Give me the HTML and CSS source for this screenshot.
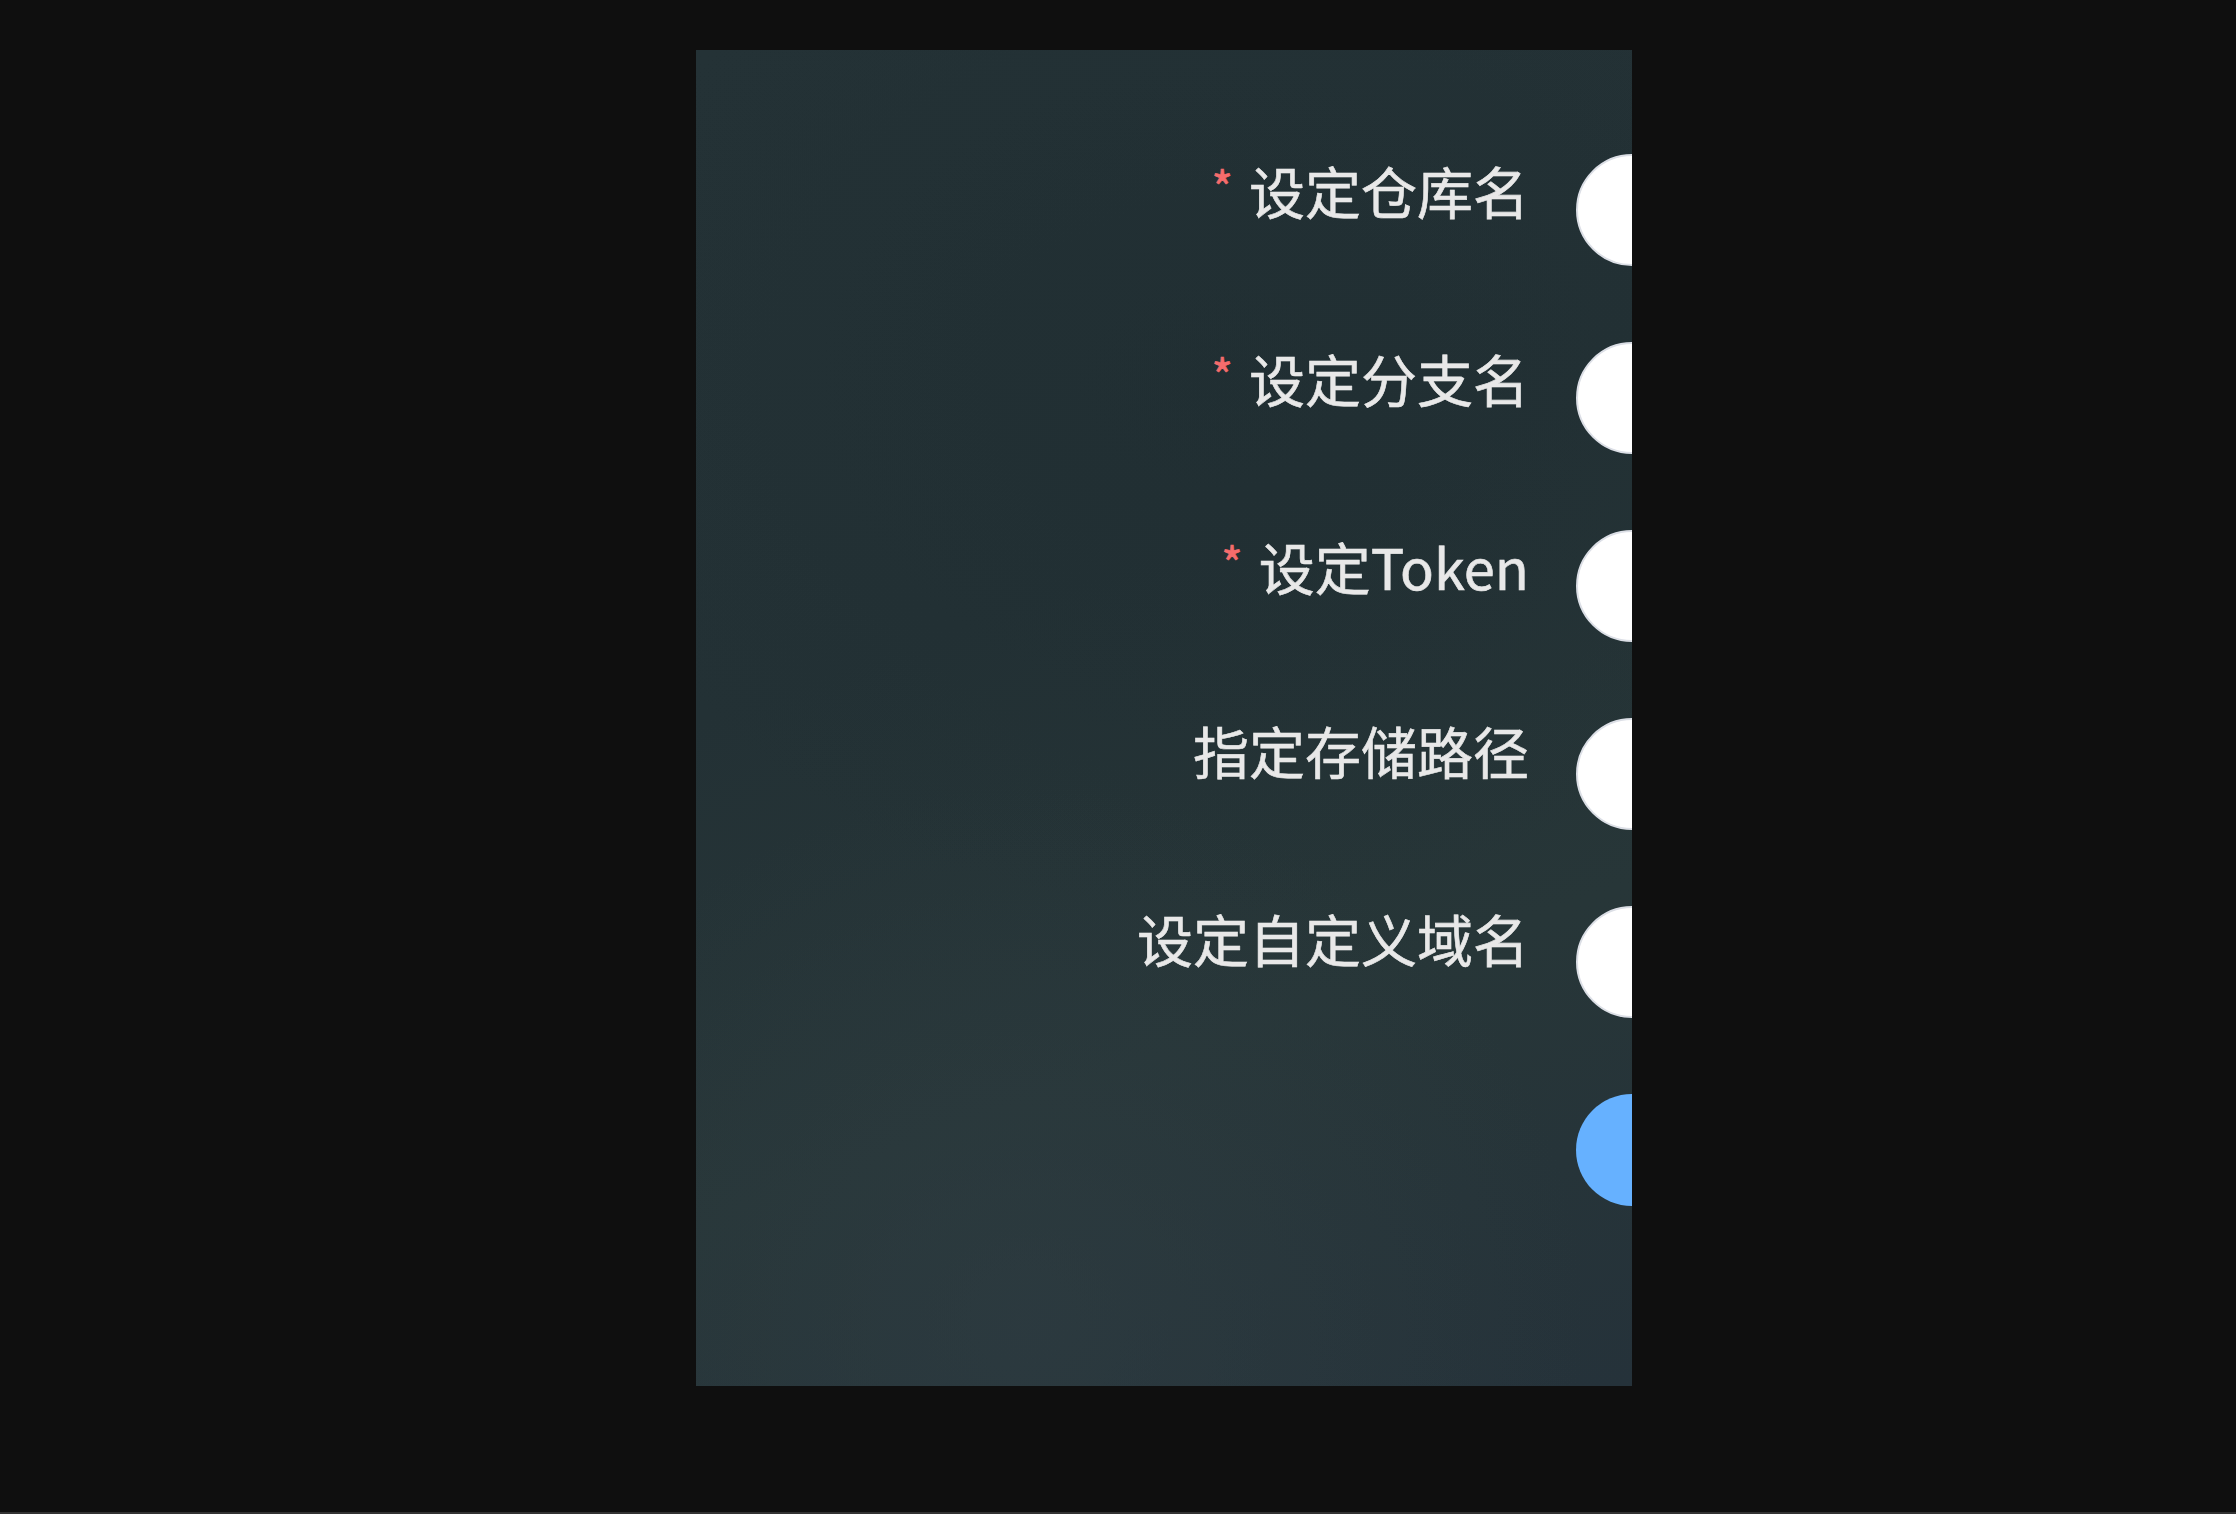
FILE: index.html
```html
<!DOCTYPE html>
<html lang="zh-CN">
<head>
<meta charset="utf-8">
<title>设置</title>
<link rel="stylesheet" href="styles.css">
</head>
<body>
<div class="page">
  <div class="panel">
    <form class="form">
      <div class="row">
        <label class="label required">设定仓库名</label>
        <div class="control"><input class="input" type="text"></div>
      </div>
      <div class="row">
        <label class="label required">设定分支名</label>
        <div class="control"><input class="input" type="text"></div>
      </div>
      <div class="row">
        <label class="label required">设定Token</label>
        <div class="control"><input class="input" type="text"></div>
      </div>
      <div class="row">
        <label class="label">指定存储路径</label>
        <div class="control"><input class="input" type="text"></div>
      </div>
      <div class="row">
        <label class="label">设定自定义域名</label>
        <div class="control"><input class="input" type="text"></div>
      </div>
      <div class="row">
        <span class="label"></span>
        <div class="control"><button class="btn" type="button"></button></div>
      </div>
    </form>
  </div>
</div>
<div class="bottom-line"></div>
</body>
</html>
```
FILE: styles.css
```css
html, body {
  margin: 0;
  padding: 0;
  background: #0f0f0f;
  width: 2236px;
  height: 1514px;
  overflow: hidden;
  font-family: "Noto Sans CJK SC", "Noto Sans", sans-serif;
}
.page {
  height: 1512px;
  padding-top: 50px;
  padding-left: 696px;
  box-sizing: border-box;
}
.bottom-line {
  height: 2px;
  background: #333333;
}
.panel {
  width: 936px;
  height: 1336px;
  overflow: hidden;
  box-sizing: border-box;
  padding-top: 104px;
  background:
    radial-gradient(ellipse 60% 40% at 35% 95%, rgba(48, 62, 68, 0.55), rgba(48, 62, 68, 0) 100%),
    radial-gradient(ellipse 70% 40% at 55% 25%, rgba(30, 44, 48, 0.5), rgba(30, 44, 48, 0) 100%),
    linear-gradient(160deg, #243236 0%, #233135 40%, #273638 70%, #25323a 100%);
}
.form {
  display: flex;
  flex-direction: column;
  gap: 76px;
}
.row {
  display: flex;
  align-items: flex-start;
}
.label {
  flex: 0 0 880px;
  box-sizing: border-box;
  padding-right: 47px;
  text-align: right;
  font-size: 56px;
  line-height: 64px;
  color: #e8e8e8;
  -webkit-text-stroke: 0.6px #e8e8e8;
}
.label.required::before {
  content: "*";
  color: #f56c6c;
  -webkit-text-stroke: 0.6px #f56c6c;
  margin-right: 16px;
  font-size: 46px;
  vertical-align: 8px;
}
.control {
  flex: 0 0 600px;
}
.input {
  display: block;
  width: 600px;
  height: 112px;
  box-sizing: border-box;
  border: 2px solid #dcdfe6;
  border-radius: 56px;
  background: #ffffff;
  outline: none;
  margin: 0;
  padding: 0 40px;
}
.btn {
  display: block;
  width: 600px;
  height: 112px;
  border: none;
  border-radius: 56px;
  background: #66b1ff;
  margin: 0;
  padding: 0;
}
```
